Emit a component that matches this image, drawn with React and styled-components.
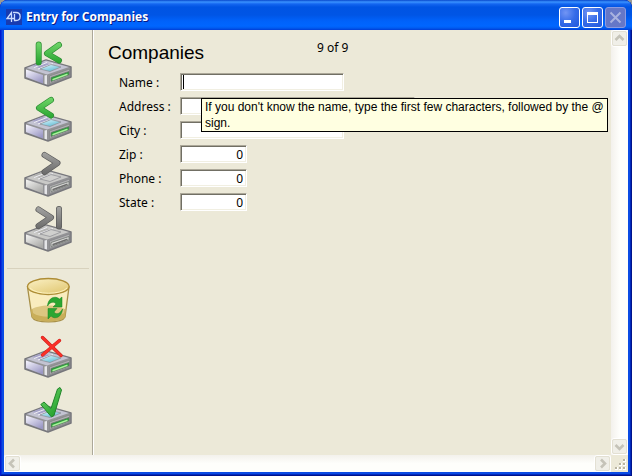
import React from "react";
import styled, { createGlobalStyle, css } from "styled-components";

const GlobalStyle = createGlobalStyle`
  *, *::before, *::after { box-sizing: border-box; }
  html, body { margin: 0; height: 100%; background: #9a9a94; }
  #root { height: 100%; }
  button, input { font: inherit; color: inherit; margin: 0; }
`;

const Window = styled.div`
  display: flex;
  flex-direction: column;
  height: 100vh;
  min-height: 460px;
  padding: 0 4px 4px;
  overflow: hidden;
  border-radius: 8px 8px 0 0;
  color: #000;
  font-family: "Noto Sans", sans-serif;
  font-size: 12px;
  line-height: 18px;
  background: #0a4be4;
  box-shadow: inset 1px 0 #0019cf, inset -1px 0 #00138c, inset 0 -1px #00138c,
    inset -2px 0 #0029bc, inset 0 -2px #0029bc, inset 2px 0 #0831d9;
`;

const TitleBar = styled.header`
  display: flex;
  flex: none;
  align-items: center;
  gap: 4px;
  height: 30px;
  margin: 0 -4px;
  padding: 4px 6px 0;
  background: linear-gradient(
    #0848cc 0, #3a93ff 2px, #1466f0 4px, #0054e3 7px, #0055e5 15px,
    #0062fa 21px, #0066ff 26px, #005bf0 28px, #003dd7 30px
  );
`;

const Title = styled.h1`
  flex: 1;
  margin: 0;
  color: #fff;
  font: bold 12px/18px "Open Sans", sans-serif;
  text-shadow: 1px 1px #0a1883;
`;

const Logo = styled.svg`
  flex: none;
  width: 16px;
  height: 16px;
`;

const Controls = styled.div`
  display: flex;
  gap: 2px;
`;

const ControlButton = styled.button`
  display: flex;
  width: 21px;
  height: 21px;
  padding: 0;
  align-items: center;
  justify-content: center;
  border: 1px solid #fff;
  border-radius: 3px;
  background: radial-gradient(circle at 30% 25%, #7295f4, #356be8 50%, #2257dc);
  ${(p) => p.disabled && css`
    border-color: #8b9ae0;
    background: #6577c7;
  `}
`;

const Client = styled.div`
  display: grid;
  flex: 1;
  min-height: 0;
  grid-template: minmax(0, 1fr) 17px / minmax(0, 1fr) 17px;
  background: #ece9d8;
`;

const Form = styled.main`
  display: flex;
  min-height: 0;
`;

const Sidebar = styled.nav`
  display: flex;
  flex: none;
  flex-direction: column;
  align-items: center;
  gap: 7px;
  width: 89px;
  padding-top: 10px;
  border-right: 1px solid #aca899;
  box-shadow: 1px 0 #fff;
`;

const ToolButton = styled.button`
  display: block;
  width: 48px;
  height: 48px;
  padding: 0;
  border: 0;
  background: none;
  svg { display: block; width: 48px; height: 48px; }
`;

const Separator = styled.hr`
  width: 82px;
  height: 1px;
  margin: 8px 0 0;
  border: 0;
  background: #d8d2bd;
`;

const Content = styled.section`
  flex: 1;
  min-width: 0;
  padding: 9px 0 0 15px;
`;

const Heading = styled.div`
  display: flex;
  height: 34px;
`;

const FormTitle = styled.h2`
  width: 209px;
  margin: 0;
  font: 19px/28px "Liberation Sans", sans-serif;
`;

const Fields = styled.form`
  display: grid;
  gap: 6px;
  padding-left: 11px;
`;

const Row = styled.div`
  position: relative;
  display: grid;
  grid-template-columns: 61px minmax(0, 1fr);
  height: 18px;
  line-height: 20px;
`;

const Input = styled.input`
  width: ${(p) => p.$width}px;
  max-width: 100%;
  height: 18px;
  padding: 1px 3px 0 2px;
  border: 1px solid;
  border-color: #aca899 #fff #fff #aca899;
  border-radius: 0;
  box-shadow: inset 1px 1px #716f64, inset -1px -1px #f1efe2;
  outline: 0;
  background: #fff;
  line-height: 14px;
  text-align: ${(p) => (p.$numeric ? "right" : "left")};
`;

const Tooltip = styled.div`
  position: absolute;
  z-index: 1;
  top: 25px;
  left: 82px;
  right: 3px;
  max-width: 407px;
  padding: 0 0 0 3px;
  border: 1px solid #000;
  background: #ffffe1;
  font: 12px/16px "Liberation Sans", sans-serif;
`;

const Caret = styled.span`
  position: absolute;
  top: 2px;
  left: 64px;
  width: 1px;
  height: 14px;
  background: #000;
`;

const ScrollBar = styled.div`
  display: flex;
  flex-direction: ${(p) => (p.$vertical ? "column" : "row")};
  justify-content: space-between;
  background: linear-gradient(${(p) => (p.$vertical ? "to right" : "to bottom")}, #f3f1ec, #fefefb 50%);
`;

const ScrollButton = styled.button`
  display: flex;
  width: 17px;
  height: 17px;
  padding: 0;
  align-items: center;
  justify-content: center;
  border: 1px solid #fff;
  border-radius: 3px;
  outline: 1px solid #e3e0d3;
  outline-offset: -2px;
  background: #f0efe8;
`;

const Grip = styled.svg`
  width: 17px;
  height: 17px;
`;

const arrows = {
  up: "M1.5 7 5.5 3l4 4",
  down: "M1.5 4l4 4 4-4",
  left: "M7 1.5 3 5.5l4 4",
  right: "M4 1.5l4 4-4 4",
};

function Scroll({ direction }) {
  return (
    <ScrollButton type="button" disabled aria-label={`Scroll ${direction}`}>
      <svg width="11" height="11" viewBox="0 0 11 11">
        <path d={arrows[direction]} fill="none" stroke="#c5c3b8" strokeWidth="2.6" />
      </svg>
    </ScrollButton>
  );
}

function Gradients() {
  const stops = [
    ["green", "#72d76b", "#22a02c"],
    ["gray", "#a4a4a2", "#686868"],
    ["violet", "#f8f7ff", "#9b98c4"],
    ["silver", "#f5f5f3", "#aaaaa8"],
    ["glass", "#e5fbff", "#5fb9d2"],
    ["gold", "#fbf1c6", "#e2c975"],
  ];
  return (
    <svg width="0" height="0" aria-hidden="true" display="block">
      <defs>
        {stops.map(([id, from, to]) => (
          <linearGradient key={id} id={id} x1="0" y1="0" x2="0.7" y2="1">
            <stop stopColor={from} />
            <stop offset="1" stopColor={to} />
          </linearGradient>
        ))}
        <linearGradient id="greenBar" gradientUnits="userSpaceOnUse" x1="0" y1="2" x2="0" y2="25">
          <stop stopColor="#72d76b" />
          <stop offset="1" stopColor="#22a02c" />
        </linearGradient>
        <linearGradient id="grayBar" gradientUnits="userSpaceOnUse" x1="0" y1="2" x2="0" y2="25">
          <stop stopColor="#a4a4a2" />
          <stop offset="1" stopColor="#686868" />
        </linearGradient>
      </defs>
    </svg>
  );
}

function Drive({ muted, children }) {
  return (
    <svg viewBox="0 0 48 48" aria-hidden="true">
      <path d="M1 28 22 20l25 7v10L24 46 1 38Z" fill="#939396" stroke="#77777c" strokeWidth="1.5" strokeLinejoin="round" />
      <path d="M2.5 28 22 20.5 45 27l-22 7.5Z" fill={muted ? "#c9c9c7" : "#c3c3d2"} />
      <path d="M8 26 18 22l11 3-10 4Z" fill={muted ? "#b4b4b2" : "#a5a2c8"} />
      <path d="M10 27.5 23 22.5M14 29 29 23.5" stroke="#eeeef4" strokeWidth="1" />
      <path d="M16 29 27 24.5l10 2.5-11 4.5Z" fill={muted ? "#d0d0ce" : "url(#glass)"} stroke="#8b8b90" strokeWidth=".7" />
      <path d="M2 29.5 19 35v8.5L2 37Z" fill={muted ? "url(#silver)" : "url(#violet)"} />
      <path d="M20.5 35.5 23 35v9.5l-2.5-.7Z" fill="#e5e5e8" />
      <path d="M25.5 36 45.5 29v7L25.5 43.5Z" fill="#b2b2b4" stroke="#858588" strokeWidth=".8" />
      <path d="M27 37.500 45 31.500v3.500L27 41.500Z" fill={muted ? "#dadad8" : "#259d35"} stroke="#6e756f" strokeWidth=".8" />
      <path d="M28.5 39.8 43.5 34.300" stroke={muted ? "#6d6d6d" : "#a9f09b"} strokeWidth="1.5" />
      {children}
    </svg>
  );
}

function Arrow({ d, muted }) {
  return (
    <g fill="none" strokeLinecap="round" strokeLinejoin="round">
      <path d={d} stroke={muted ? "#5a5a5a" : "#2c8c32"} strokeWidth="6" />
      <path d={d} stroke={muted ? "url(#grayBar)" : "url(#greenBar)"} strokeWidth="4.6" />
    </g>
  );
}

const arrowPaths = {
  "First record": "M14.7 4.5V22.5M35 5 23 13.5 35 20.5",
  "Previous record": "M27 5 15 13 27 20.5",
  "Next record": "M20.5 5 33.5 13 20.5 22",
  "Last record": "M14.5 4.5 27 12.5 14.5 21M35 4V21.5",
};

function Trash() {
  return (
    <svg viewBox="0 0 48 48" aria-hidden="true">
      <path d="M3.5 11 8 41c3 6.500 30 6.500 33 0L45 11Z" fill="#f6e9b9" stroke="#a78f48" strokeWidth="1.3" />
      <path d="M6.500 34C14 28 35 28 42 34L41 41c-3 6-30 6-33 0Z" fill="#c9ae59" />
      <path d="M5 15c9 6 29 6 38 0l-3 22c-8 5-24 5-31 0Z" fill="#fff4c8" opacity=".35" />
      <ellipse cx="24.300" cy="10.500" rx="20.800" ry="8" fill="url(#gold)" stroke="#ae8d36" strokeWidth="1.3" />
      <path d="M6 12c6 7 31 7 37 0" fill="none" stroke="#fff3bf" strokeWidth="1" />
      <g fill="#2ca631" stroke="#168022" strokeWidth=".5">
        <path d="M23.500 30C24 22 31 19 35.500 23L38 21v10h-9l3-3c-2-3-6-2-8.500 2Z" />
        <path d="M38.500 33C38 41 31 44 27 40l-3 3V32.500h9L30 36c2 3 6 2 8.500-3Z" />
      </g>
    </svg>
  );
}

const fields = [
  { name: "Name", width: 164 },
  { name: "Address", width: 235 },
  { name: "City", width: 164 },
  { name: "Zip", width: 67, value: "0" },
  { name: "Phone", width: 67, value: "0" },
  { name: "State", width: 67, value: "0" },
];

export default function App() {
  return (
    <Window>
      <GlobalStyle />
      <TitleBar>
        <Logo viewBox="0 0 16 16" aria-hidden="true">
          <path d="M0 0h16v16H0Z" fill="#183bb0" />
          <path d="M5.500 13V3.500L1 9.500h7M7 3.500h3c5.500 0 5.500 8 0 8H8.500V5" fill="none" stroke="#cbdcff" strokeWidth="1.3" />
        </Logo>
        <Title>Entry for Companies</Title>
        <Controls>
          <ControlButton type="button" aria-label="Minimize">
            <svg width="19" height="19" viewBox="0 0 19 19"><path d="M4 12h7v3H4Z" fill="#fff" /></svg>
          </ControlButton>
          <ControlButton type="button" aria-label="Maximize">
            <svg width="19" height="19" viewBox="0 0 19 19"><path d="M4 4h11v11H4ZM5 7v7h9V7Z" fill="#fff" fillRule="evenodd" /></svg>
          </ControlButton>
          <ControlButton type="button" aria-label="Close" disabled>
            <svg width="19" height="19" viewBox="0 0 19 19"><path d="m4.500 4.500 10 10m0-10-10 10" stroke="#a9b2df" strokeWidth="2" /></svg>
          </ControlButton>
        </Controls>
      </TitleBar>
      <Client>
        <Form>
          <Sidebar aria-label="Record actions">
            {Object.entries(arrowPaths).map(([label, d], i) => (
              <ToolButton key={label} type="button" aria-label={label} disabled={i > 1}>
                <Drive muted={i > 1}><Arrow d={d} muted={i > 1} /></Drive>
              </ToolButton>
            ))}
            <Separator />
            <ToolButton type="button" aria-label="Delete record"><Trash /></ToolButton>
            <ToolButton type="button" aria-label="Cancel">
              <Drive>
                <path d="M18.500 6.500 37 24.500M35.500 9.500 18.500 24" fill="none" stroke="#c9211d" strokeWidth="3.400" strokeLinecap="round" />
                <path d="M18.500 6.500 37 24.500M35.500 9.500 18.500 24" fill="none" stroke="#fb3028" strokeWidth="2.400" strokeLinecap="round" />
              </Drive>
            </ToolButton>
            <ToolButton type="button" aria-label="Save">
              <Drive>
                <path d="M16.800 18.500 20 16l7 6.500L33.500 3l2.500-1.500L37.500 4 30 29.500 27.500 31Z" fill="url(#green)" stroke="#21852a" strokeLinejoin="round" />
              </Drive>
            </ToolButton>
          </Sidebar>
          <Content>
            <Heading>
              <FormTitle>Companies</FormTitle>
              <span>9 of 9</span>
            </Heading>
            <Fields>
              {fields.map(({ name, width, value }) => (
                <Row key={name}>
                  <label htmlFor={name}>{name} :</label>
                  <Input
                    id={name}
                    $width={width}
                    $numeric={value !== undefined}
                    defaultValue={value}
                    aria-describedby={name === "Name" ? "hint" : undefined}
                  />
                  {name === "Name" && (
                    <>
                      <Caret />
                      <Tooltip id="hint" role="tooltip">
                        If you don't know the name, type the first few characters, followed by the @ sign.
                      </Tooltip>
                    </>
                  )}
                </Row>
              ))}
            </Fields>
          </Content>
        </Form>
        <ScrollBar $vertical><Scroll direction="up" /><Scroll direction="down" /></ScrollBar>
        <ScrollBar><Scroll direction="left" /><Scroll direction="right" /></ScrollBar>
        <Grip viewBox="0 0 17 17" aria-hidden="true">
          <path d="M12 4h3v3h-3ZM8 8h3v3H8ZM12 8h3v3h-3ZM4 12h3v3H4ZM8 12h3v3H8ZM12 12h3v3h-3Z" fill="#fff" />
          <path d="M12 4h2v2h-2ZM8 8h2v2H8ZM12 8h2v2h-2ZM4 12h2v2H4ZM8 12h2v2H8ZM12 12h2v2h-2Z" fill="#b8b4a2" />
        </Grip>
      </Client>
      <Gradients />
    </Window>
  );
}
